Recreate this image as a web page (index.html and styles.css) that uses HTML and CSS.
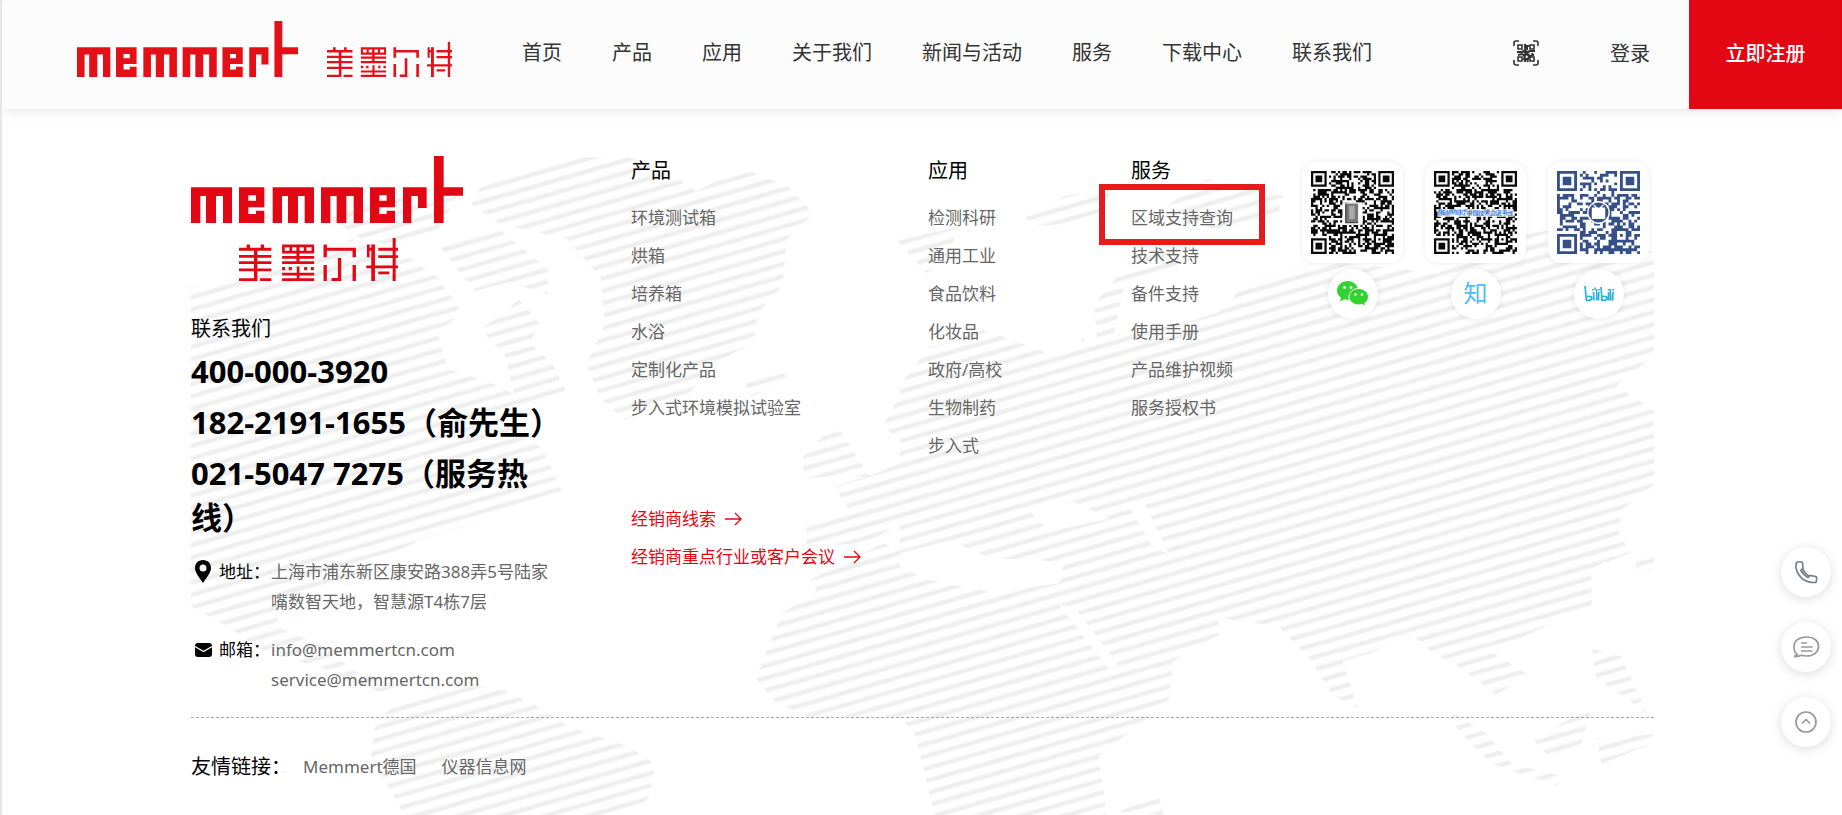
FILE: index.html
```html
<!DOCTYPE html>
<html lang="zh-CN">
<head>
<meta charset="utf-8">
<title>Memmert 美墨尔特</title>
<link rel="stylesheet" href="styles.css">
</head>
<body>
<svg class="defs" aria-hidden="true">
  <symbol id="logo-latin" viewBox="0 0 816 201" preserveAspectRatio="none">
    <path d="M0 94H123V201H96V120H75V201H45V120H28V201H0ZM245 94H369V201H341V120H321V201H291V120H273V201H245ZM390 94H516V201H488V120H466V201H437V120H418V201H390ZM636 94H707V156H681V120H661V201H636ZM729 0H758V94H816V119H758V201H729Z"/>
    <path fill-rule="evenodd" d="M144 94H220V154H172V174H195V164H220V202H144ZM172 118V134H195V118ZM537 94H612V154H565V174H587V164H612V202H537ZM565 118V134H587V118Z"/>
  </symbol>
  <symbol id="logo-cn" viewBox="0 0 476 127" preserveAspectRatio="none">
    <path d="M23 19h10v11h-10zM65 19h10v11h-10zM0 29h97v9H0zM0 50h97v8H0zM0 69h97v8H0zM0 90h97v8H0zM45 29h10v98h-10zM0 119h55v8H0zM63 119h34v8H63z"/>
    <path d="M129 19h96v8h-96zM129 38h96v8h-96zM129 19h8v27h-8zM151 19h8v27h-8zM172 19h9v58h-9zM194 19h8v27h-8zM217 19h8v27h-8zM129 53h96v8h-96zM129 69h96v8h-96zM129 86h9v9h-9zM149 86h9v9h-9zM173 84h8v43h-8zM195 86h9v9h-9zM215 86h9v9h-9zM129 103h96v8h-96zM129 119h96v8h-96z"/>
    <path d="M253 19h10v38h-10zM253 29h97v9h-97zM340 29h10v28h-10zM253 80h10v47h-10zM340 80h10v47h-10zM296 59h10v68h-10zM277 118h29v9h-29z"/>
    <path d="M383 19h8v38h-8zM396 19h11v108h-11zM383 29h24v9h-24zM417 29h59v9h-59zM417 51h59v8h-59zM381 81h95v8h-95zM417 99h33v8h-33zM460 0h9v127h-9z"/>
  </symbol>
  <symbol id="arrow" viewBox="0 0 18 14"><path d="M1 7H17M11 1l6 6-6 6" fill="none" stroke="currentColor" stroke-width="1.3"/></symbol>
</svg>

<header class="topbar">
  <a class="brand" href="#" aria-label="memmert 美墨尔特">
    <svg class="brand-latin"><use href="#logo-latin"/></svg>
    <svg class="brand-cn"><use href="#logo-cn"/></svg>
  </a>
  <nav class="nav">
    <a href="#">首页</a><a href="#">产品</a><a href="#">应用</a><a href="#">关于我们</a><a href="#">新闻与活动</a><a href="#">服务</a><a href="#">下载中心</a><a href="#">联系我们</a>
  </nav>
  <div class="account">
    <button class="scan" aria-label="二维码">
      <svg viewBox="0 0 26 26" fill="none" stroke="#333" stroke-width="1.6">
        <path d="M1 6V3q0-2 2-2h3M20 1h3q2 0 2 2v3M25 20v3q0 2-2 2h-3M6 25H3q-2 0-2-2v-3"/>
        <path d="M5 5h4v4H5zM17 5h4v4h-4zM5 17h4v4H5zM17 17h4v4h-4z"/>
        <path stroke-width="2" d="M12 4v4l2 1V6h2M4 12h5l3-2 2 3 3-2h5M5 15l4-1 3 2 1-3 4 3 4-1M12 16l-1 3h4l1-3 2 1M12 22v-3M15 22l-1-3M10 11l6 5M16 11l-6 5M19 13l1 3"/>
      </svg>
    </button>
    <a class="login" href="#">登录</a>
    <a class="register" href="#">立即注册</a>
  </div>
</header>

<footer class="footer">
  <div class="footer-inner">
    <svg class="map" viewBox="0 0 1463 660" preserveAspectRatio="xMinYMin slice" aria-hidden="true">
      <defs>
        <pattern id="hatch" width="40" height="12.4" patternUnits="userSpaceOnUse" patternTransform="skewY(-16)"><path d="M0 6H40" stroke="#f5f5f5" stroke-width="5.6"/><path d="M0 6H40" stroke="#eee" stroke-width="2.8"/></pattern>
        <mask id="land" maskUnits="userSpaceOnUse" x="0" y="0" width="1463" height="660">
          <g transform="translate(-21 -15) scale(.4783 .4305)" fill="#fff">
            <path d="M40 340L130 325 260 290 380 230 470 250 560 320 610 400 560 450 580 530 660 560 720 590 700 500 650 440 730 370 775 430 750 470 800 520 830 590 700 650 780 720 820 820 730 850 640 890 520 930 430 980 390 1030 240 1060 220 1130 330 1180 380 1230 470 1270 450 1290 330 1230 200 1190 120 1130 40 1080Z"/>
            <path d="M330 180L460 110 540 150 600 130 560 210 480 250 400 230ZM650 110L760 60 860 40 960 40 1050 80 1100 120 1190 65 1290 105 1345 170 1290 230 1280 340 1230 400 1220 470 1120 530 1080 600 950 650 900 600 870 520 910 430 900 320 830 230 690 195 630 150ZM560 240L680 200 790 300 790 360 710 330 640 350 600 300Z"/>
            <path d="M470 1310L560 1270 680 1270 760 1310 830 1360 960 1410 1015 1450 1000 1530 950 1568H490L420 1430 430 1360Z"/>
            <path d="M1200 560L1280 540 1300 560 1215 595Z"/>
            <path d="M1225 1250L1280 1100 1400 1010 1500 970 1600 950V1340H1330L1260 1300Z"/>
          </g>
          <g transform="translate(409 -15) scale(.3333)" fill="#fff">
            <path d="M610 950L680 880 720 870 770 950 810 1010 700 1010 610 1015Z"/>
            <path d="M700 1040L830 1000 920 960 900 900 850 860 900 760 1000 620 1150 570 1340 640 1500 610V1100L1380 1090 1200 1130 1060 1150 950 1130 880 1160 800 1210 620 1220 620 1150 750 1110Z"/>
            <path d="M630 1320L850 1210 980 1270 1100 1240 1250 1290 1500 1300V1430H700ZM890 300L1080 260 1040 350 980 400Z"/>
          </g>
          <g transform="translate(709 -15) scale(.4975 .4305)" fill="#fff">
            <path d="M0 570L60 480 190 450 330 510 370 460 400 520 390 380 450 300 560 230 560 290 450 340 430 450 560 430 640 400 700 330 850 280 1080 310 1210 230 1300 210 1516 260V500L1440 570 1516 630V800L1450 860 1440 960 1390 1000 1390 1080 1260 1150 1190 1190 1260 1240 1200 1290 1120 1220 1070 1190 1030 1150 950 1190 890 1210 920 1320 870 1290 820 1200 760 1130 640 1110 640 1150 550 1210 540 1300 500 1340 400 1430 415 1568H70L30 1380 0 1340Z"/>
            <path d="M250 180L330 130 430 110 390 190 280 200ZM540 150L620 90 770 130 760 170 650 210 560 190ZM1390 920L1430 890 1470 960 1420 980ZM1480 970L1516 960V1000L1480 1010ZM1390 1180L1450 1200 1500 1330 1400 1250ZM1270 1390L1390 1320 1370 1400 1310 1440ZM1110 1330L1180 1380 1230 1450 1340 1480 1320 1500 1190 1450 1120 1370ZM1400 1390L1516 1380V1400L1410 1450ZM440 1560L520 1520 530 1568Z"/>
            <g fill="#000">
              <path d="M0 960L100 930 180 970 330 980 320 1030 180 1050 50 1020 0 990ZM260 860L350 840 420 880 300 910ZM460 850L490 840 540 960 510 950ZM320 1080L350 1085 440 1220 420 1230Z"/>
            </g>
          </g>
        </mask>
      </defs>
      <rect width="1463" height="660" fill="url(#hatch)" mask="url(#land)"/>
    </svg>

    <div class="columns">
      <section class="contact">
        <div class="footer-logo">
          <svg class="footer-latin"><use href="#logo-latin"/></svg>
          <svg class="footer-cn"><use href="#logo-cn"/></svg>
        </div>
        <h2 class="contact-title">联系我们</h2>
        <p class="phone">400-000-3920</p>
        <p class="phone">182-2191-1655（俞先生）</p>
        <p class="phone">021-5047 7275（服务热线）</p>
        <div class="detail">
          <svg class="detail-icon" viewBox="0 0 18 24"><path fill-rule="evenodd" d="M9 0c5 0 8 3.600 8 8 0 5-5 10-8 15C6 18 1 13 1 8c0-4.400 3-8 8-8zm0 4.500a3.500 3.500 0 1 0 0 7 3.500 3.500 0 0 0 0-7z"/></svg>
          <span class="detail-label">地址：</span>
          <span class="detail-text">上海市浦东新区康安路388弄5号陆家嘴数智天地，智慧源T4栋7层</span>
        </div>
        <div class="detail">
          <svg class="detail-icon" viewBox="0 0 18 24"><rect y="5" x="1" width="17" height="14" rx="3"/><path d="M1 8.500l8.500 5 8.500-5" fill="none" stroke="#fff" stroke-width="1.400"/></svg>
          <span class="detail-label">邮箱：</span>
          <span class="detail-text"><a href="#">info@memmertcn.com</a><br><a href="#">service@memmertcn.com</a></span>
        </div>
      </section>

      <section class="col">
        <h2>产品</h2>
        <ul>
          <li><a href="#">环境测试箱</a></li><li><a href="#">烘箱</a></li><li><a href="#">培养箱</a></li><li><a href="#">水浴</a></li><li><a href="#">定制化产品</a></li><li><a href="#">步入式环境模拟试验室</a></li>
        </ul>
        <ul class="dealer">
          <li><a href="#">经销商线索<svg><use href="#arrow"/></svg></a></li>
          <li><a href="#">经销商重点行业或客户会议<svg><use href="#arrow"/></svg></a></li>
        </ul>
      </section>

      <section class="col">
        <h2>应用</h2>
        <ul>
          <li><a href="#">检测科研</a></li><li><a href="#">通用工业</a></li><li><a href="#">食品饮料</a></li><li><a href="#">化妆品</a></li><li><a href="#">政府/高校</a></li><li><a href="#">生物制药</a></li><li><a href="#">步入式</a></li>
        </ul>
      </section>

      <section class="col">
        <h2>服务</h2>
        <ul>
          <li class="marked"><a href="#">区域支持查询</a></li><li><a href="#">技术支持</a></li><li><a href="#">备件支持</a></li><li><a href="#">使用手册</a></li><li><a href="#">产品维护视频</a></li><li><a href="#">服务授权书</a></li>
        </ul>
      </section>

      <section class="social">
        <div class="channel">
          <div class="qr-card">
            <svg viewBox="0 0 37 37" class="qr"><path class="modules" data-size="37" data-seed="11"/>
              <rect x="14" y="14" width="9" height="10" fill="#fff"/><rect x="15.500" y="14.500" width="5.500" height="8.500" fill="#777"/><rect x="17" y="15.500" width="2.500" height="6" fill="#aaa"/><path d="M15.500 14.500v8.500h5.500" fill="none" stroke="#444" stroke-width=".6"/></svg>
          </div>
          <a class="badge" href="#" aria-label="微信">
            <svg viewBox="0 0 32 26" width="32" height="26"><g fill="#32d232"><path d="M11 0C5 0 0 4 0 9.500c0 3 1.500 5.500 4 7.200L3 20.500l4.500-2.200q1.700.5 3.800.5L21 9C20.500 3.500 16 0 11 0z"/><path stroke="#fff" d="M21.500 7.500c-5.300 0-9.500 3.700-9.500 8.200s4.200 8.200 9.500 8.200q1.800 0 3.400-.5l3.800 2-1-3.200c2.300-1.500 3.800-3.800 3.800-6.500 0-4.500-4.500-8.200-10-8.200z"/></g><g fill="#fff"><circle cx="7.500" cy="6.500" r="1.400"/><circle cx="14" cy="6.500" r="1.400"/><circle cx="18.500" cy="13.500" r="1.200"/><circle cx="25" cy="13.500" r="1.200"/></g></svg>
          </a>
        </div>
        <div class="channel">
          <div class="qr-card">
            <svg viewBox="0 0 37 37" class="qr"><path class="modules" data-size="37" data-seed="29"/>
              <rect x="1.500" y="17" width="34" height="3.500" fill="#fff" opacity=".75"/><text x="18.500" y="19.700" text-anchor="middle" class="qr-caption">MEMMERT中国技术交流平台</text></svg>
          </div>
          <a class="badge zhi" href="#">知</a>
        </div>
        <div class="channel">
          <div class="qr-card blue">
            <svg viewBox="0 0 29 29" class="qr"><path class="modules" data-size="29" data-seed="47"/>
              <circle cx="14.500" cy="14.500" r="4" fill="#fff"/><circle cx="14.500" cy="14.500" r="3.500"/><path d="M12.400 13h4.200v3.500h-4.200zM12.800 11.800l1.200 1.200M16.200 11.800l-1.200 1.200" fill="#fff" stroke="#fff" stroke-width=".5"/></svg>
          </div>
          <a class="badge" href="#" aria-label="bilibili">
            <svg viewBox="0 0 30 16" width="30" height="16" fill="none" stroke="#2cb2dc" stroke-width="1.700"><path d="M1 0l1.500 14.500q5 0 5.500-2.500-.5-2-5-1.500M9.500 6l.5 8.500M11 1.500l.2 2M12.500 3l.3 11.500M14.800 6l-.3 8.500M17 1l1 13.500q5 0 5.500-2.500-.5-2-5-1.500M24.500 6l.3 8.500M26.300 3l.5 11.500M29 6l-.3 8.500M9 3v1.500M15 3v1.500M24.500 3v1.500M29 3v1.500"/></svg>
          </a>
        </div>
      </section>
    </div>

    <div class="friends">
      <span>友情链接：</span><a href="#">Memmert德国</a><a href="#">仪器信息网</a>
    </div>
  </div>
</footer>

<aside class="float">
  <button aria-label="电话"><svg viewBox="0 0 24 24" class="phone-icon"><path d="M2.500 2.500q3-1.500 6 0l.5 6-2.200 1.700q2.500 5 7.200 7.300l2-2 6.300 1.200q1 3-.5 5.800Q6 23 2 8q-.3-3 .5-5.500z"/><path d="M8.500 9q2.500 5 7 7.500"/></svg></button>
  <button aria-label="留言"><svg viewBox="0 0 26 24" class="wide"><path d="M4 19.500Q1 17 1 11.500C1 6 6 2 13.500 2S25.500 6 25.500 11.500 20.500 21 13.500 21q-2.500 0-5-.7-3 1.500-7.500 1.200 2.500-1 3-2zM8 8h6M8 12h11.500M8 16h11.500"/></svg></button>
  <button aria-label="返回顶部"><svg viewBox="0 0 24 24"><circle cx="12" cy="12" r="10"/><path d="M8 13.500l4-4 4 4"/></svg></button>
</aside>
<script src="qr.js"></script>
</body>
</html>
```
FILE: styles.css
```css
*, *::before { box-sizing: border-box; }
body {
  margin: 0;
  background: #fff;
  border-left: 2px solid #e6e6e6;
  color: #000;
  font-family: "Noto Sans", "Noto Sans CJK SC", sans-serif;
  font-size: 17px;
}
a { color: inherit; text-decoration: none; }
h2, p, ul { margin: 0; padding: 0; }
ul { list-style: none; }
button { border: 0; padding: 0; background: none; cursor: pointer; }
.defs { position: absolute; width: 0; height: 0; }

.topbar {
  position: relative;
  z-index: 2;
  display: flex;
  align-items: stretch;
  height: 109px;
  padding-left: 75px;
  background: #fcfcfc;
  border-top-left-radius: 8px;
  box-shadow: 0 2px 14px rgba(0, 0, 0, .1);
  color: #333;
  font-family: "Noto Sans CJK SC", sans-serif;
  font-size: 20px;
}
.brand { display: flex; align-items: flex-end; gap: 29px; padding-bottom: 32px; fill: #e31018; }
.brand-latin { width: 221px; height: 56px; }
.brand-cn { width: 125px; height: 35px; }
.nav { display: flex; align-items: center; gap: 50px; margin-left: 70px; padding-bottom: 6px; white-space: nowrap; }
.account { display: flex; align-items: center; margin-left: auto; }
.scan { width: 26px; height: 26px; margin: 0 71px 4px 0; }
.scan svg { display: block; }
.login { margin-right: 39px; padding-bottom: 5px; }
.register {
  display: flex;
  align-items: center;
  align-self: stretch;
  justify-content: center;
  width: 153px;
  padding-bottom: 5px;
  background: #e30613;
  color: #fff;
  font-weight: 500;
}

.footer { padding: 46px 188px 0 189px; }
.footer-inner { position: relative; min-height: calc(100vh - 155px); }
.map { position: absolute; inset: 0; width: 100%; height: 100%; }
.columns {
  position: relative;
  display: grid;
  grid-template-columns: 440fr 297fr 203fr 171fr 352fr;
  border-bottom: 1px dashed #aaa;
  padding-bottom: 22px;
}

.contact { max-width: 372px; }
.footer-logo { width: 272px; padding-top: 1px; fill: #e30613; }
.footer-logo svg { display: block; }
.footer-latin { width: 100%; height: 67px; }
.footer-cn { width: 159px; height: 43px; margin: 15px 0 0 48px; }
.contact-title { margin-top: 33px; font-size: 20px; font-weight: 400; line-height: 30px; }
.phone { margin-bottom: 7px; font-size: 31px; font-weight: 700; line-height: 44px; }
.contact-title + .phone { margin-top: 5px; }
.detail { display: flex; margin-top: 18px; line-height: 30px; }
.detail-icon { flex: none; width: 18px; height: 24px; margin: 3px 7px 0 3px; }
.detail-label { flex: none; width: 52px; }
.detail-text { color: #666; }

.col h2 { padding-top: 1px; font-size: 20px; font-weight: 400; line-height: 30px; }
.col ul { margin-top: 13px; }
.col li { line-height: 38px; color: #666; white-space: nowrap; }
.col .dealer { margin-top: 73px; }
.dealer li { color: #e30613; }
.dealer a { display: inline-flex; align-items: center; gap: 8px; }
.dealer svg { width: 18px; height: 14px; }
.marked { position: relative; }
.marked::before {
  content: "";
  position: absolute;
  inset: -15px auto auto -32px;
  width: 166px;
  height: 61px;
  border: 6px solid #e61b1e;
  pointer-events: none;
}

.social { display: flex; gap: 22px; padding-top: 7px; }
.channel { display: flex; flex-direction: column; align-items: center; gap: 6px; }
.qr-card { width: 101px; padding: 9px; border-radius: 14px; background: #fff; box-shadow: 0 0 6px rgba(0, 0, 0, .08); fill: #0a0a0a; }
.qr-card.blue { fill: #354f88; }
.qr { display: block; width: 100%; }
.qr-caption { fill: #1677ff; font: 500 2.6px "Noto Sans CJK SC", sans-serif; }
.badge {
  display: flex;
  align-items: center;
  justify-content: center;
  width: 50px;
  height: 50px;
  border-radius: 50%;
  background: #fff;
  box-shadow: 0 0 7px rgba(0, 0, 0, .1);
}
.zhi { color: #4fbcfc; font-size: 24px; line-height: 24px; padding-bottom: 3px; }

.friends { position: relative; display: flex; align-items: center; padding-top: 34px; line-height: 30px; color: #666; }
.friends span { width: 112px; color: #000; font-size: 20px; }
.friends a + a { margin-left: 25px; }

.float { position: fixed; right: 11px; bottom: 68px; z-index: 3; display: grid; gap: 25px; }
.float button {
  display: grid;
  place-items: center;
  width: 50px;
  height: 50px;
  border-radius: 50%;
  background: #fff;
  box-shadow: 0 2px 12px rgba(0, 0, 0, .14);
}
.float svg { width: 24px; height: 24px; fill: none; stroke: #999; stroke-width: 1.7; }
.float .phone-icon { stroke: #75808a; }
.float .wide { width: 28px; }
```
FILE: qr.js
```js
function finder(x, y) {
  return `M${x} ${y}h7v7h-7zM${x + 1} ${y + 1}v5h5v-5zM${x + 2} ${y + 2}h3v3h-3z`;
}

document.querySelectorAll(".modules").forEach((path) => {
  const n = Number(path.dataset.size);
  let state = Number(path.dataset.seed);
  const random = () => {
    state = (state * 1103515245 + 12345) % 2147483648;
    return state / 2147483648;
  };
  let d = finder(0, 0) + finder(n - 7, 0) + finder(0, n - 7);
  const a = n - 9;
  d += `M${a} ${a}h5v5h-5zM${a + 1} ${a + 1}v3h3v-3zM${a + 2} ${a + 2}h1v1h-1z`;
  for (let y = 0; y < n; y++) {
    for (let x = 0; x < n; x++) {
      const dark = random() > 0.48;
      const corner = (x < 8 && y < 8) || (x >= n - 8 && y < 8) || (x < 8 && y >= n - 8);
      const align = x >= a && x < a + 5 && y >= a && y < a + 5;
      if (dark && !corner && !align) d += `M${x} ${y}h1v1h-1z`;
    }
  }
  path.setAttribute("d", d);
});
```
